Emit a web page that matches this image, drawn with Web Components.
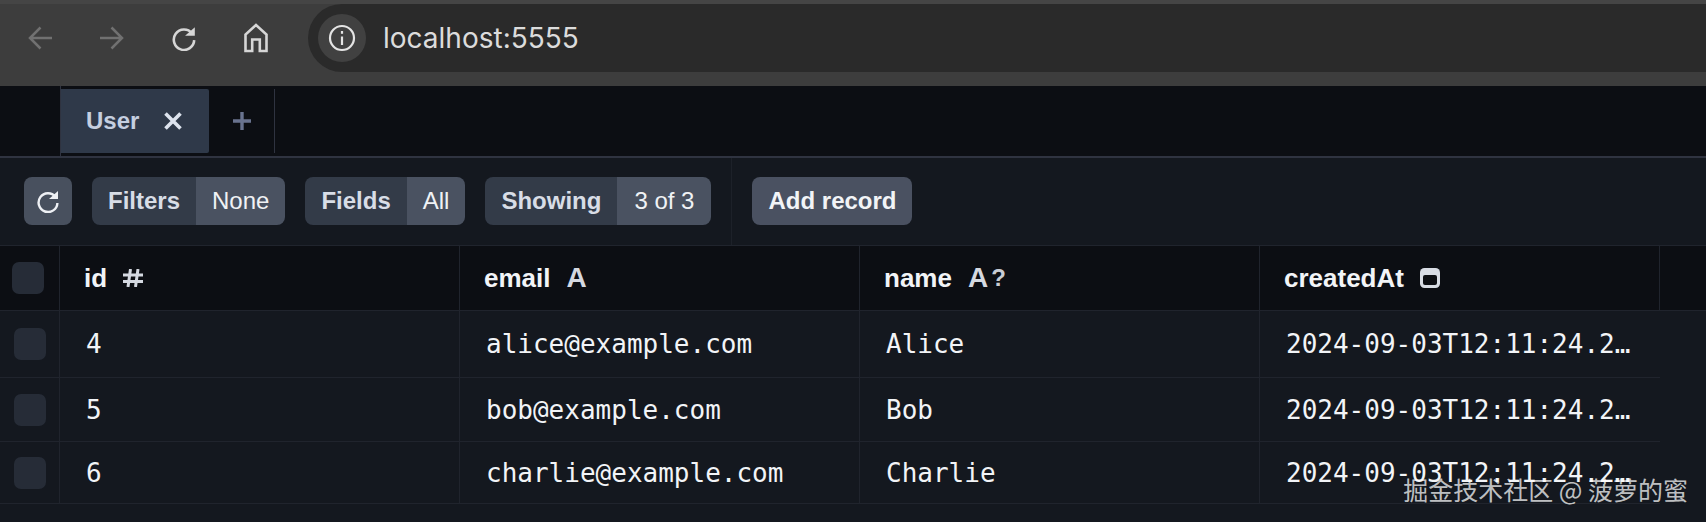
<!DOCTYPE html>
<html lang="en">
<head>
<meta charset="utf-8">
<title>Prisma Studio</title>
<style>
    html, body { margin: 0; height: 522px; overflow: hidden; background: #14181f; }
    body { display: flex; flex-direction: column; position: relative; font-family: "Liberation Sans", Arial, sans-serif; }
</style>
</head>
<body>
<browser-bar url="localhost:5555"></browser-bar>
<tab-bar>
    <tab-item>User</tab-item>
</tab-bar>
<tool-bar>
    <tool-group label="Filters" value="None"></tool-group>
    <tool-group label="Fields" value="All"></tool-group>
    <tool-group label="Showing" value="3 of 3" style="--value-pad: 17px"></tool-group>
    <button-add slot="actions">Add record</button-add>
</tool-bar>
<data-table>
    <table-row head height="65">
        <table-cell check></table-cell>
        <table-cell head kind="#">id</table-cell>
        <table-cell head kind="A">email</table-cell>
        <table-cell head kind="A" optional>name</table-cell>
        <table-cell head kind="date">createdAt</table-cell>
        <table-cell></table-cell>
    </table-row>
    <table-row height="67">
        <table-cell check></table-cell>
        <table-cell>4</table-cell>
        <table-cell>alice@example.com</table-cell>
        <table-cell>Alice</table-cell>
        <table-cell>2024-09-03T12:11:24.2…</table-cell>
    </table-row>
    <table-row height="64">
        <table-cell check></table-cell>
        <table-cell>5</table-cell>
        <table-cell>bob@example.com</table-cell>
        <table-cell>Bob</table-cell>
        <table-cell>2024-09-03T12:11:24.2…</table-cell>
    </table-row>
    <table-row height="62">
        <table-cell check></table-cell>
        <table-cell>6</table-cell>
        <table-cell>charlie@example.com</table-cell>
        <table-cell>Charlie</table-cell>
        <table-cell>2024-09-03T12:11:24.2…</table-cell>
    </table-row>
</data-table>
<water-mark>掘金技术社区 @ 菠萝的蜜</water-mark>

<script>
const RELOAD = `<path d="M19.4 7.8A9.4 9.4 0 1 0 21.4 14" fill="none" stroke="currentColor" stroke-width="2.4"/><path d="M13 10H22V2Z" fill="currentColor"/>`;

class BrowserBar extends HTMLElement {
    constructor() {
        super();
        this.attachShadow({ mode: 'open' });
    }

    connectedCallback() {
        this.shadowRoot.innerHTML = `
            <style>
                :host {
                    display: flex;
                    flex: none;
                    height: 86px;
                    box-sizing: border-box;
                    padding: 4px 0 14px 4px;
                    background: linear-gradient(#454545 0, #454545 4px, #3d3d3d 4px);
                    align-items: stretch;
                }
                .nav {
                    display: grid;
                    grid-template-columns: repeat(4, 72px);
                    margin-right: 16px;
                    place-items: center;
                }
                svg { display: block; }
                .off { color: #717171; }
                .on { color: #d6d6d6; }
                .pill {
                    flex: 1;
                    display: flex;
                    align-items: center;
                    gap: 17px;
                    background: #2a2a2a;
                    border-radius: 34px 0 0 34px;
                    padding-left: 10px;
                }
                .info {
                    width: 48px;
                    height: 48px;
                    border-radius: 50%;
                    background: #414141;
                    display: grid;
                    place-items: center;
                }
                .url {
                    font: 28px Inter, "Liberation Sans", sans-serif;
                    color: #dcdcdc;
                }
            </style>
            <div class="nav">
                <svg class="off" width="24" height="24" viewBox="0 0 24 24" fill="none" stroke="currentColor" stroke-width="2.5"><path d="M24 12H2M12.5 1.5 2 12 12.5 22.5"/></svg>
                <svg class="off" width="24" height="24" viewBox="0 0 24 24" fill="none" stroke="currentColor" stroke-width="2.5"><path d="M0 12H22M11.5 1.5 22 12 11.5 22.5"/></svg>
                <svg class="on" width="26" height="26" viewBox="0 0 24 24">${RELOAD}</svg>
                <svg class="on" width="24" height="30" viewBox="0 0 24 30" fill="none" stroke="currentColor" stroke-width="2.6"><path d="M1.5 28V11.5L12 2 22.5 11.5V28H15.8V16.5H8.2V28Z"/></svg>
            </div>
            <div class="pill">
                <div class="info">
                    <svg width="28" height="28" viewBox="0 0 28 28" fill="none" stroke="#e4e4e4" stroke-width="2.2"><circle cx="14" cy="14" r="12"/><path d="M14 12.5V21"/><path d="M14 7V9.8"/></svg>
                </div>
                <span class="url">${this.getAttribute('url')}</span>
            </div>`;
    }
}
customElements.define('browser-bar', BrowserBar);

class TabBar extends HTMLElement {
    constructor() {
        super();
        this.attachShadow({ mode: 'open' });
    }

    connectedCallback() {
        this.shadowRoot.innerHTML = `
            <style>
                :host {
                    display: flex;
                    flex: none;
                    height: 72px;
                    box-sizing: border-box;
                    padding-left: 60px;
                    background: #0c0e13;
                    border-bottom: 2px solid #2f3340;
                }
                .edge { width: 1px; background: #2f3340; flex: none; }
                .add {
                    width: 66px;
                    height: 64px;
                    box-sizing: border-box;
                    margin-top: 3px;
                    display: grid;
                    place-items: center;
                    border-right: 1px solid #2f3340;
                }
            </style>
            <div class="edge"></div>
            <slot></slot>
            <div class="add">
                <svg width="20" height="20" viewBox="0 0 20 20" stroke="#69738f" stroke-width="3.4"><path d="M10 1V19M1 10H19"/></svg>
            </div>`;
    }
}
customElements.define('tab-bar', TabBar);

class TabItem extends HTMLElement {
    constructor() {
        super();
        this.attachShadow({ mode: 'open' });
    }

    connectedCallback() {
        this.shadowRoot.innerHTML = `
            <style>
                :host {
                    display: flex;
                    align-items: center;
                    gap: 25px;
                    width: 148px;
                    height: 64px;
                    margin-top: 3px;
                    box-sizing: border-box;
                    padding-left: 25px;
                    background: #2f3949;
                    border-radius: 0 2px 2px 0;
                    color: #c5cfe0;
                    font-weight: 700;
                    font-size: 24px;
                }
            </style>
            <slot></slot>
            <svg width="18" height="18" viewBox="0 0 18 18" stroke="#dde3ee" stroke-width="3.6"><path d="M1.5 1.5 16.5 16.5M16.5 1.5 1.5 16.5"/></svg>`;
    }
}
customElements.define('tab-item', TabItem);

class ToolBar extends HTMLElement {
    constructor() {
        super();
        this.attachShadow({ mode: 'open' });
    }

    connectedCallback() {
        this.shadowRoot.innerHTML = `
            <style>
                :host {
                    display: flex;
                    flex: none;
                    height: 88px;
                    box-sizing: border-box;
                    padding-left: 24px;
                    background: #14181f;
                    border-bottom: 1px solid #20242d;
                }
                .main {
                    display: flex;
                    align-items: center;
                    gap: 20px;
                    padding: 0 20px 2px 0;
                    border-right: 1px solid #1d2129;
                }
                .actions {
                    display: flex;
                    align-items: center;
                    padding: 0 0 2px 20px;
                }
                .refresh {
                    width: 48px;
                    height: 48px;
                    border-radius: 8px;
                    background: #48505e;
                    display: grid;
                    place-items: center;
                    color: #eef0f4;
                }
            </style>
            <div class="main">
                <div class="refresh"><svg width="24" height="24" viewBox="0 0 24 24">${RELOAD}</svg></div>
                <slot></slot>
            </div>
            <div class="actions"><slot name="actions"></slot></div>`;
    }
}
customElements.define('tool-bar', ToolBar);

class ToolGroup extends HTMLElement {
    constructor() {
        super();
        this.attachShadow({ mode: 'open' });
    }

    connectedCallback() {
        this.shadowRoot.innerHTML = `
            <style>
                :host {
                    display: flex;
                    height: 48px;
                    border-radius: 8px;
                    overflow: hidden;
                    font-size: 24px;
                    line-height: 48px;
                }
                .label {
                    padding: 0 16px;
                    background: #333b48;
                    color: #d8dde6;
                    font-weight: 700;
                }
                .value {
                    padding: 0 var(--value-pad, 16px);
                    background: #4a5261;
                    color: #f0f2f5;
                }
            </style>
            <div class="label">${this.getAttribute('label')}</div>
            <div class="value">${this.getAttribute('value')}</div>`;
    }
}
customElements.define('tool-group', ToolGroup);

class ButtonAdd extends HTMLElement {
    constructor() {
        super();
        this.attachShadow({ mode: 'open' });
    }

    connectedCallback() {
        this.shadowRoot.innerHTML = `
            <style>
                :host {
                    display: block;
                    height: 48px;
                    padding: 0 16px;
                    border-radius: 8px;
                    background: #4a5161;
                    color: #f2f4f7;
                    font-size: 24px;
                    font-weight: 700;
                    line-height: 48px;
                }
            </style>
            <slot></slot>`;
    }
}
customElements.define('button-add', ButtonAdd);

class DataTable extends HTMLElement {
    constructor() {
        super();
        this.attachShadow({ mode: 'open' });
    }

    connectedCallback() {
        this.shadowRoot.innerHTML = `
            <style>
                :host { display: flex; flex-direction: column; flex: 1; }
            </style>
            <slot></slot>`;
    }
}
customElements.define('data-table', DataTable);

class TableRow extends HTMLElement {
    constructor() {
        super();
        this.attachShadow({ mode: 'open' });
    }

    connectedCallback() {
        const head = this.hasAttribute('head');
        this.shadowRoot.innerHTML = `
            <style>
                :host {
                    display: grid;
                    grid-template-columns: 60px 400px 400px 400px ${head ? '400px 1fr' : '400px'};
                    width: ${head ? '100%' : '1660px'};
                    height: ${this.getAttribute('height')}px;
                    flex: none;
                    box-sizing: border-box;
                    border-bottom: 1px solid #20242d;
                    background: ${head ? '#0c0e13' : '#14181f'};
                }
            </style>
            <slot></slot>`;
    }
}
customElements.define('table-row', TableRow);

class TableCell extends HTMLElement {
    constructor() {
        super();
        this.attachShadow({ mode: 'open' });
    }

    kindIcon() {
        const kind = this.getAttribute('kind');
        if (kind === 'date') {
            return `<svg width="20" height="20" viewBox="0 0 20 20"><rect width="20" height="20" rx="4.5" fill="#d8dce4"/><rect x="3" y="7" width="14" height="10" rx="2" fill="#0c0e13"/></svg>`;
        }
        if (kind === '#') {
            return `<svg width="20" height="18" viewBox="0 0 20 18" fill="none" stroke="#d5d9e1" stroke-width="3"><path d="M7.5 0 5 18M15 0 12.5 18M0 6H20M0 12.5H20"/></svg>`;
        }
        if (!kind) return '';
        return `<span class="kind">${kind}</span>${this.hasAttribute('optional') ? '<span class="opt">?</span>' : ''}`;
    }

    connectedCallback() {
        const head = this.hasAttribute('head');
        const check = this.hasAttribute('check');
        const inRowHead = this.parentElement.hasAttribute('head');
        const left = check ? (inRowHead ? 12 : 14) : (head ? 24 : 26);
        this.shadowRoot.innerHTML = `
            <style>
                :host {
                    display: flex;
                    align-items: center;
                    min-width: 0;
                    box-sizing: border-box;
                    padding: 0 ${check ? 0 : 25}px 0 ${left}px;
                    border-right: 1px solid #20242d;
                    color: #f2f4f7;
                    font: ${head ? '700 26px "Liberation Sans", Arial, sans-serif' : '26px "DejaVu Sans Mono", monospace'};
                    white-space: nowrap;
                    gap: 16px;
                }
                :host(:last-child) { border-right: none; }
                .kind { font-size: 28px; color: #d5d9e1; }
                .opt { font-size: 24px; color: #c8ccd4; margin-left: -13px; }
                .box { width: 32px; height: 32px; border-radius: 7px; background: #262c37; flex: none; }
            </style>
            ${check ? '<div class="box"></div>' : `<span><slot></slot></span>${this.kindIcon()}`}`;
    }
}
customElements.define('table-cell', TableCell);

class WaterMark extends HTMLElement {
    constructor() {
        super();
        this.attachShadow({ mode: 'open' });
    }

    connectedCallback() {
        this.shadowRoot.innerHTML = `
            <style>
                :host {
                    position: absolute;
                    right: 18px;
                    top: 471px;
                    color: rgba(255, 255, 255, 0.74);
                    font: 25px/36px "Noto Sans CJK SC", "Liberation Sans", sans-serif;
                    white-space: nowrap;
                }
            </style>
            <slot></slot>`;
    }
}
customElements.define('water-mark', WaterMark);
</script>
</body>
</html>
